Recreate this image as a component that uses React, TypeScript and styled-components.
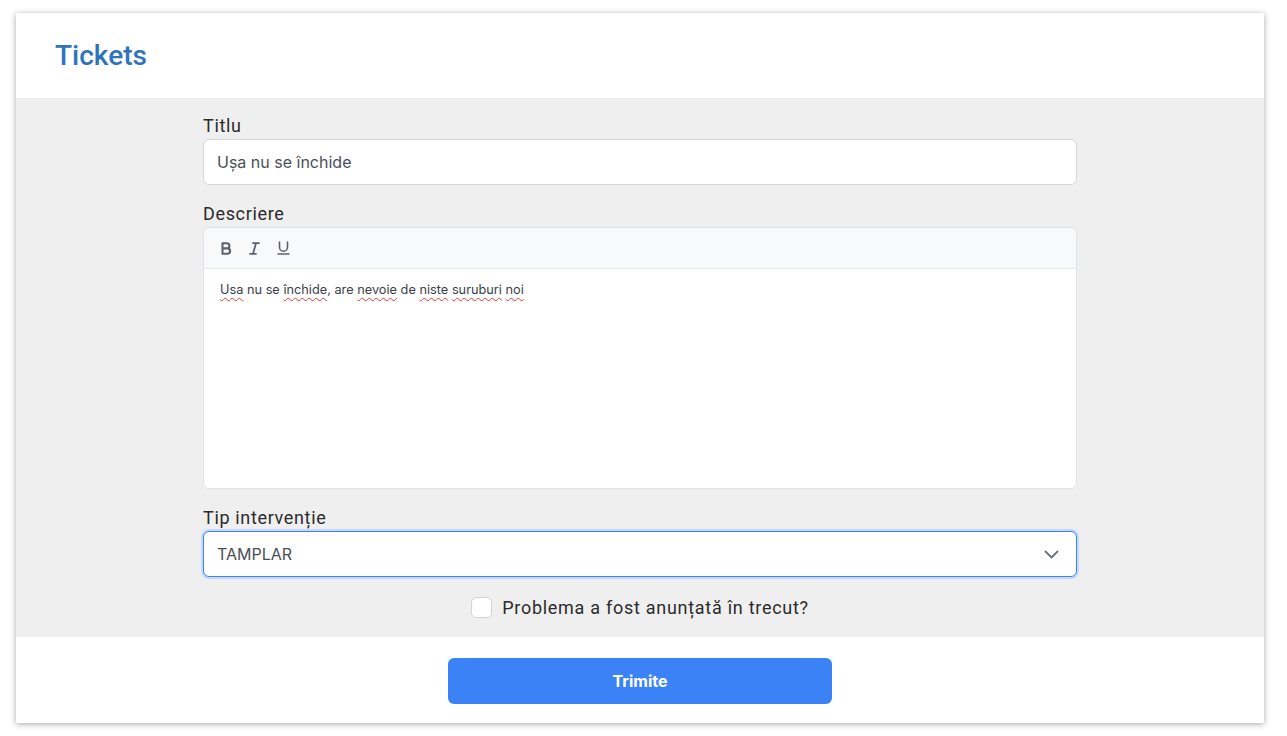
import React from 'react';
import styled, { createGlobalStyle } from 'styled-components';

const Global = createGlobalStyle`
  html, body { margin: 0; padding: 0; background: #fff; }
  * { box-sizing: border-box; }
`;

const Page = styled.div`
  padding: 13px 23px 13px 16px;
`;

const Card = styled.div`
  width: 1248px;
  height: 710px;
  display: flex;
  flex-direction: column;
  background: #fff;
  box-shadow: 0 1px 6px rgba(0, 0, 0, 0.35);
`;

const Header = styled.div`
  height: 85px;
  display: flex;
  align-items: center;
  padding: 0 39px;
  padding-bottom: 1px;
`;

const Title = styled.h1`
  margin: 0;
  font-family: Roboto, sans-serif;
  font-weight: 500;
  font-size: 28px;
  color: #2e74bc;
`;

const Body = styled.div`
  flex: 1;
  background: #efefef;
  padding: 15px 0 16px;
  display: flex;
  justify-content: center;
`;

const Form = styled.div`
  width: 874px;
  display: flex;
  flex-direction: column;
`;

const Field = styled.div`
  margin-bottom: 16px;
`;

const Label = styled.div`
  font-family: Roboto, sans-serif;
  font-size: 18px;
  line-height: 26px;
  letter-spacing: 0.65px;
  color: #2b2b2b;
`;

const Input = styled.div<{ $focus?: boolean }>`
  height: 46px;
  background: #fff;
  border: 1px solid ${p => (p.$focus ? '#3b82f6' : '#d4d6da')};
  border-radius: 6px;
  box-shadow: ${p => (p.$focus ? '0 0 0 2px #c3dafd' : 'none')};
  display: flex;
  align-items: center;
  justify-content: space-between;
  padding: 0 17px 0 13px;
  font-family: Inter, sans-serif;
  font-size: 16px;
  color: #4b5058;
`;

const Editor = styled.div`
  height: 262px;
  background: #fff;
  border: 1px solid #e1e3e6;
  border-radius: 6px;
  overflow: hidden;
  display: flex;
  flex-direction: column;
`;

const Toolbar = styled.div`
  height: 41px;
  background: #f8f9fa;
  border-bottom: 1px solid #e5e7eb;
  display: flex;
  align-items: center;
  gap: 17px;
  padding: 0 0 0 17px;
  color: #5c6370;
`;

const ToolIcon = styled.svg`
  display: block;
  fill: none;
  stroke: currentColor;
  stroke-linecap: round;
  stroke-linejoin: round;
`;

const Content = styled.div`
  padding: 13px 16px;
  font-family: Inter, sans-serif;
  font-size: 12.75px;
  color: #3a3f47;
`;

const Typo = styled.span`
  text-decoration: underline wavy #e53935;
  text-decoration-thickness: 1px;
  text-underline-offset: 3px;
`;

const CheckRow = styled.label`
  display: flex;
  align-items: center;
  justify-content: center;
  gap: 10px;
  height: 28px;
  font-family: Roboto, sans-serif;
  font-size: 18px;
  letter-spacing: 0.72px;
  color: #2b2b2b;
`;

const Box = styled.span`
  width: 21px;
  height: 21px;
  border: 1px solid #d1d5db;
  border-radius: 5px;
  background: #fff;
`;

const Footer = styled.div`
  height: 86px;
  display: flex;
  justify-content: center;
  padding-top: 21px;
`;

const Submit = styled.button`
  width: 384px;
  height: 46px;
  border: none;
  border-radius: 6px;
  background: #3b82f6;
  color: #fff;
  font-family: Inter, sans-serif;
  font-weight: 700;
  font-size: 16px;
`;

export default function App() {
  return (
    <Page>
      <Global />
      <Card>
        <Header>
          <Title>Tickets</Title>
        </Header>
        <Body>
          <Form>
            <Field>
              <Label>Titlu</Label>
              <Input>Ușa nu se închide</Input>
            </Field>
            <Field>
              <Label>Descriere</Label>
              <Editor>
                <Toolbar>
                  <ToolIcon width="11" height="13" viewBox="0 0 11 13" strokeWidth={2.1}>
                    <path d="M1.5 1.2h4.3a2.6 2.6 0 0 1 0 5.2H1.5z M1.5 6.4h4.9a2.7 2.7 0 0 1 0 5.4H1.5z" />
                  </ToolIcon>
                  <ToolIcon width="11" height="13" viewBox="0 0 11 13" strokeWidth={1.8}>
                    <path d="M4 1.2h6 M1 11.8h6 M7 1.2 L4 11.8" />
                  </ToolIcon>
                  <ToolIcon width="13" height="14" viewBox="0 0 13 14" strokeWidth={1.6}>
                    <path d="M2.5 1v5.2a4 4 0 0 0 8 0V1 M1 13h11" />
                  </ToolIcon>
                </Toolbar>
                <Content>
                  <Typo>Usa</Typo> nu se <Typo>închide</Typo>, are <Typo>nevoie</Typo> de{' '}
                  <Typo>niste</Typo> <Typo>suruburi</Typo> <Typo>noi</Typo>
                </Content>
              </Editor>
            </Field>
            <Field>
              <Label>Tip intervenție</Label>
              <Input $focus>
                TAMPLAR
                <ToolIcon width="15" height="9" viewBox="0 0 15 9" strokeWidth={1.8} style={{ color: '#6b7280' }}>
                  <path d="M1.5 1.5l6 6 6-6" />
                </ToolIcon>
              </Input>
            </Field>
            <CheckRow>
              <Box />
              Problema a fost anunțată în trecut?
            </CheckRow>
          </Form>
        </Body>
        <Footer>
          <Submit>Trimite</Submit>
        </Footer>
      </Card>
    </Page>
  );
}
